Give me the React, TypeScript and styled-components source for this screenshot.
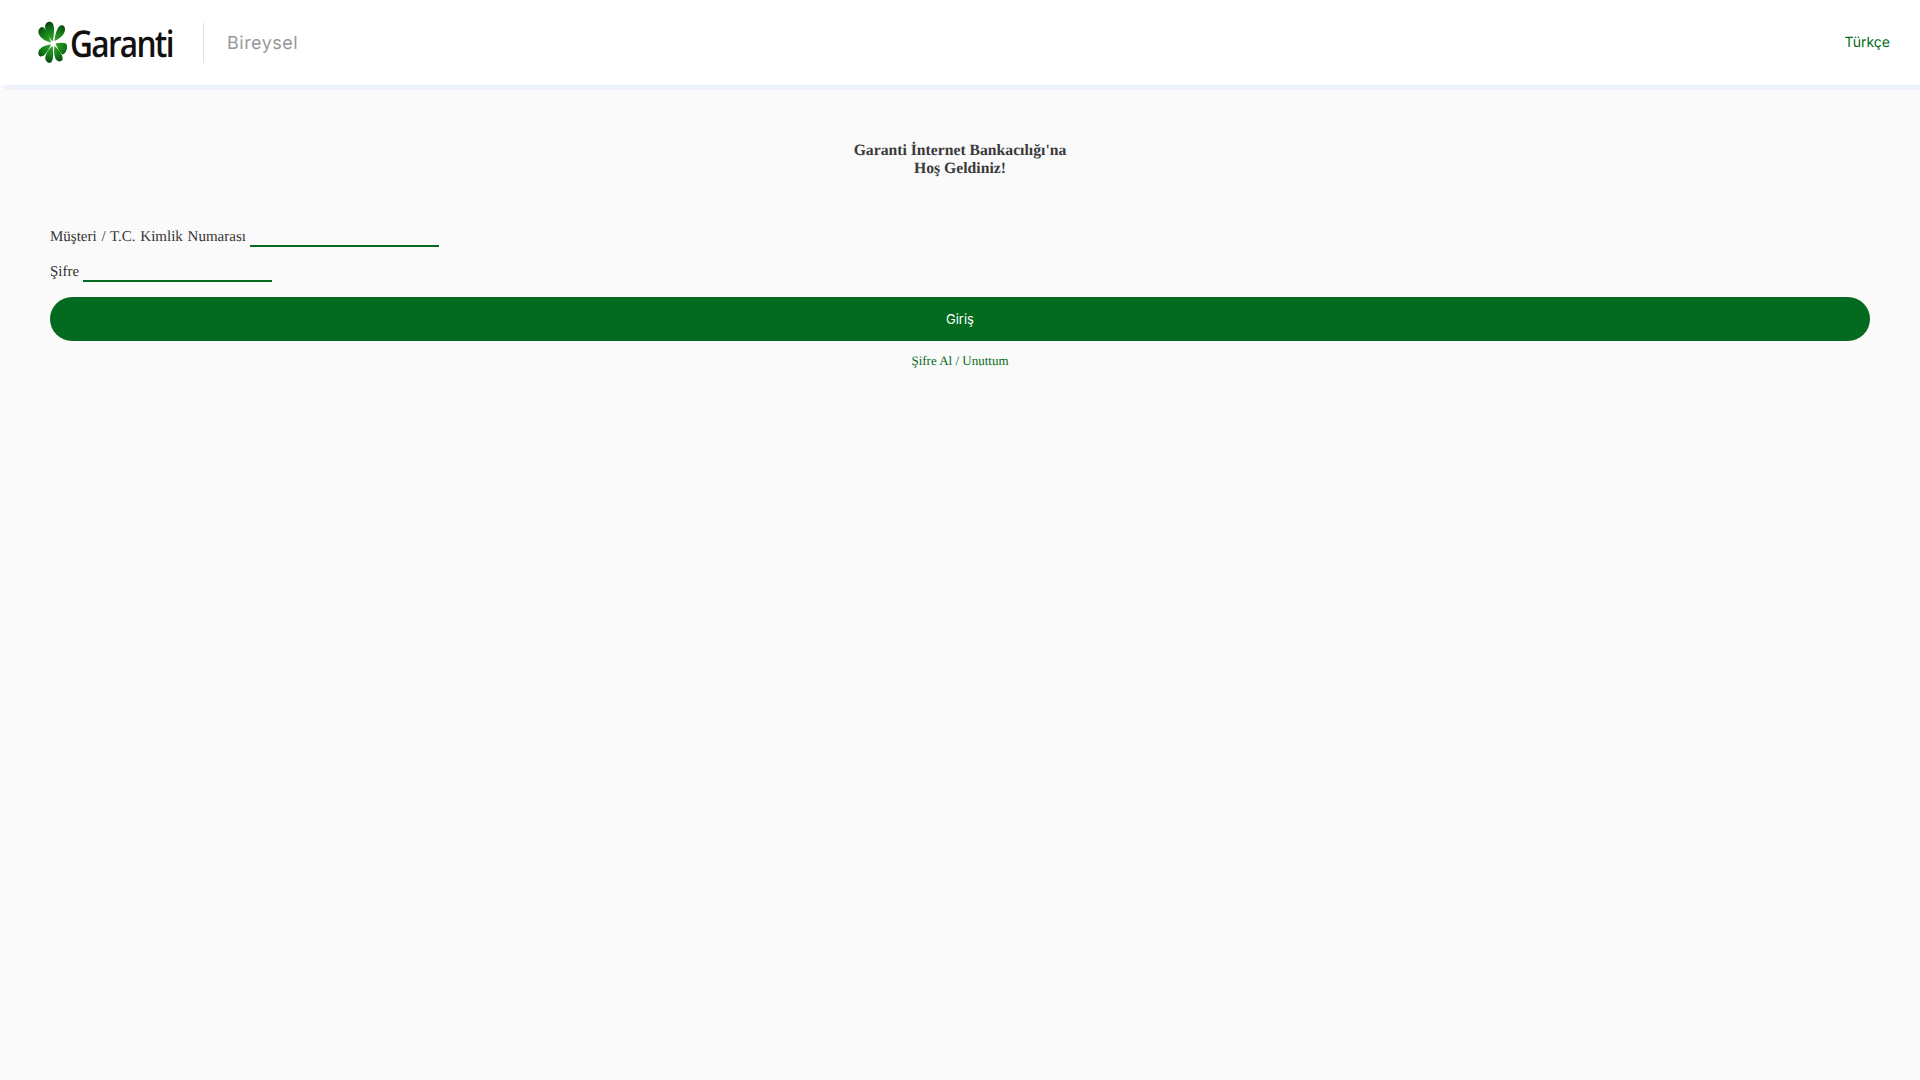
import { FC } from 'react'
import styled, { createGlobalStyle } from 'styled-components'

const green = '#046a20'

const GlobalStyle = createGlobalStyle`
	html, body {
		margin: 0;
		padding: 0;
		background: #fafafa;
	}
	* {
		box-sizing: border-box;
	}
`

const Page = styled.div`
	min-height: 100vh;
	background: #fafafa;
	font-family: 'Liberation Serif', 'Times New Roman', serif;
	text-rendering: geometricPrecision;
	color: #333;
	overflow: hidden;
`

const Header = styled.header`
	height: 85px;
	background: #fff;
	display: flex;
	align-items: center;
	padding: 0 30px 0 38px;
	box-shadow: 5px 5px 0 0 #edf1f8;
`

const Brand = styled.a`
	display: flex;
	align-items: center;
	width: 165px;
	height: 44px;
	gap: 2px;
`

const Wordmark = styled.span`
	display: inline-block;
	font-family: 'Open Sans', 'Noto Sans', sans-serif;
	font-size: 37px;
	font-weight: 600;
	letter-spacing: -2px;
	color: #111;
	line-height: 44px;
	transform: scaleX(0.855);
	transform-origin: left center;
`

const Section = styled.div`
	height: 40px;
	border-left: 1px solid #e2e2e2;
	padding-left: 23px;
	line-height: 41px;
	font-family: Inter, sans-serif;
	font-size: 18px;
	letter-spacing: 0.5px;
	color: #999;
`

const Language = styled.a`
	margin-left: auto;
	font-family: Inter, sans-serif;
	font-size: 14px;
	font-weight: 400;
	line-height: 82px;
	height: 82px;
	color: ${green};
`

const Main = styled.main`
	padding: 0 50px;
`

const Title = styled.h1`
	margin: 0;
	padding-top: 57px;
	font-size: 15.7px;
	line-height: 18px;
	font-weight: 700;
	text-align: center;
	color: #3a3a3a;
`

const Form = styled.form`
	display: flex;
	flex-direction: column;
	padding-top: 34px;
`

const Field = styled.label`
	display: flex;
	align-items: flex-end;
	gap: 4px;
	height: 35px;
	font-size: 15px;
	word-spacing: 1px;
	line-height: 20px;
	color: #333;
`

const Input = styled.input`
	width: 189px;
	height: 22px;
	padding: 0;
	border: 0;
	border-bottom: 2px solid ${green};
	background: transparent;
	outline: none;
`

const Submit = styled.button`
	height: 44px;
	margin-top: 15px;
	border: 0;
	border-radius: 22px;
	background: ${green};
	color: #fff;
	font-family: Inter, sans-serif;
	font-size: 13px;
`

const Forgot = styled.a`
	margin-top: 12px;
	text-align: center;
	font-size: 13px;
	line-height: 15px;
	color: ${green};
`

const CloverLogo: FC = () => (
	<svg width="30" height="44" viewBox="0 0 30 44">
		<defs>
			<radialGradient id="leaf" gradientUnits="userSpaceOnUse" cx="15" cy="22" r="24">
				<stop offset="0" stopColor="#3fae30" />
				<stop offset="0.55" stopColor="#137a18" />
				<stop offset="1" stopColor="#052e0a" />
			</radialGradient>
		</defs>
		<g fill="url(#leaf)">
			<path d="M14.500 20.500C10 15 6.500 9 7.200 4.500 7.700 1.500 10.500 0 13 1c3.500 1.500 4 9 1.500 19.500z" />
			<path d="M13 21.500C8 20.500 2.500 17 .8 13c-1.200-3 .3-6.500 3.200-7 3-.3 6 6.500 9 15.500z" />
			<path d="M16.500 20C17 13 19 6.500 22.500 4.500c2.500-1.200 5 1 4.500 4.500-.7 4.500-4.500 8.500-10.500 11z" />
			<path d="M17.500 22.500c3.500-1 7.500-1.200 10-.3 1.800 1 2 4 1 6.800-1 3-3 5.500-4.800 4-2.200-2-4.500-6-6.200-10.500z" />
			<path d="M13 23.500c-4.500.2-9 2-11.500 5-2 2.500-1.500 6 .7 7 3 1 8-5 10.800-12z" />
			<path d="M14.500 25c-4 3.500-7 8-7.200 11.500-.2 3.500 2.500 6 5 5.300 3-1 3.500-8 2.200-16.800z" />
			<path d="M16.500 25c-.7 5-.5 10.500 1.500 13.500 2 2.500 5.500 2.500 6.500 0 1-3.500-3-9-8-13.500z" />
		</g>
	</svg>
)

const App: FC = () => (
	<Page>
		<GlobalStyle />
		<Header>
			<Brand>
				<CloverLogo />
				<Wordmark>Garanti</Wordmark>
			</Brand>
			<Section>Bireysel</Section>
			<Language>Türkçe</Language>
		</Header>
		<Main>
			<Title>
				Garanti İnternet Bankacılığı'na
				<br />
				Hoş Geldiniz!
			</Title>
			<Form onSubmit={e => e.preventDefault()}>
				<Field>
					Müşteri / T.C. Kimlik Numarası
					<Input type="text" />
				</Field>
				<Field>
					Şifre
					<Input type="password" />
				</Field>
				<Submit type="submit">Giriş</Submit>
				<Forgot>Şifre Al / Unuttum</Forgot>
			</Form>
		</Main>
	</Page>
)

export default App
